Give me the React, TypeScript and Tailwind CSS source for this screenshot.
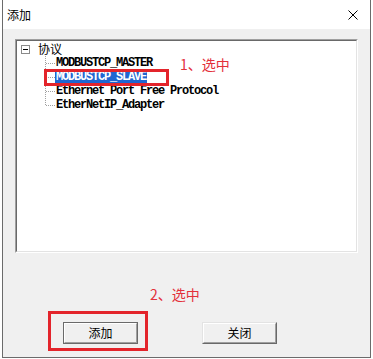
import React from "react";

const cjk = { fontFamily: '"Noto Sans CJK SC", "Noto Sans", sans-serif' };

function Connector({ last }: { last?: boolean }) {
  return (
    <svg width="10" height="14" className="shrink-0" viewBox="0 0 10 14">
      <line x1="0.5" y1="0" x2="0.5" y2={last ? 7 : 14} stroke="#a0a0a0" strokeDasharray="1 1" />
      <line x1="1" y1="7.5" x2="10" y2="7.5" stroke="#a0a0a0" strokeDasharray="1 1" />
    </svg>
  );
}

function Child({ text, selected, last }: { text: string; selected?: boolean; last?: boolean }) {
  return (
    <div className="flex h-[14px] items-center">
      <div className="w-[28px] shrink-0" />
      <Connector last={last} />
      <span
        className={
          "px-[1px] h-[13px] flex items-center whitespace-pre font-bold text-[12px] tracking-[-1.2px] " +
          (selected ? "bg-[#1f66d1] text-white" : "text-black")
        }
        style={{ fontFamily: '"Liberation Mono", monospace' }}
      >
        {text}
      </span>
    </div>
  );
}

export default function App() {
  return (
    <div className="w-[373px] h-[359px] bg-white" style={cjk}>
      <div className="ml-[2px] w-[369px] h-[358px] flex flex-col border-x border-b border-[#6b6b6b]">
        <div className="h-[29px] bg-white flex items-center justify-between pl-[4px] pr-[12px]">
          <span className="text-[12px] text-black leading-none">添加</span>
          <svg width="10" height="10" viewBox="0 0 10 10">
            <line x1="0.5" y1="0.5" x2="9.5" y2="9.5" stroke="#000" strokeWidth="1" />
            <line x1="9.5" y1="0.5" x2="0.5" y2="9.5" stroke="#000" strokeWidth="1" />
          </svg>
        </div>
        <div className="flex-1 bg-[#f0f0f0] relative flex flex-col">
          <div className="mt-[10px] mx-[12px] h-[214px] border-t border-l border-[#a0a0a0] border-b border-r border-b-white border-r-white flex">
            <div className="flex-1 bg-white border-t border-l border-[#696969] border-b border-r border-b-[#e3e3e3] border-r-[#e3e3e3] pt-[1px]">
              <div className="flex h-[14px] items-center">
                <div className="w-[4px] shrink-0" />
                <div className="w-[9px] h-[9px] border border-[#8a8a8a] flex items-center justify-center shrink-0">
                  <div className="w-[5px] h-[1px] bg-black" />
                </div>
                <div className="w-[8px] shrink-0" />
                <span className="text-[12px] leading-none text-black">协议</span>
              </div>
              <Child text="MODBUSTCP_MASTER" />
              <Child text="MODBUSTCP_SLAVE" selected />
              <Child text="Ethernet Port Free Protocol" />
              <Child text="EtherNetIP_Adapter" last />
            </div>
          </div>

          <div className="mt-auto pb-[13px] pl-[60px] flex gap-[64px]">
            <div className="relative">
              <div className="w-[75px] h-[22px] border border-[#6a6a6a] flex">
                <div className="flex-1 bg-[#f0f0f0] border-t border-l border-white border-b border-r border-b-[#a0a0a0] border-r-[#a0a0a0] flex items-center justify-center text-[12px] text-black">
                  添加
                </div>
              </div>
              <div className="absolute left-[-15px] top-[-11px] w-[100px] h-[40px] border-[3px] border-[#e3242b]" />
            </div>
            <div className="w-[75px] h-[22px] border-t border-l border-[#e3e3e3] border-b border-r border-b-[#696969] border-r-[#696969] flex">
              <div className="flex-1 bg-[#f0f0f0] border-t border-l border-white border-b border-r border-b-[#a0a0a0] border-r-[#a0a0a0] flex items-center justify-center text-[12px] text-black">
                关闭
              </div>
            </div>
          </div>

          <div className="absolute left-[41px] top-[40px] w-[125px] h-[17px] border-[3px] border-[#e3242b]" />
          <div className="absolute left-[177px] top-[27px] text-[14px] leading-[16px] text-[#e3303a]">1、选中</div>
          <div className="absolute left-[147px] top-[257px] text-[14px] leading-[16px] text-[#e3303a]">2、选中</div>
        </div>
      </div>
    </div>
  );
}
